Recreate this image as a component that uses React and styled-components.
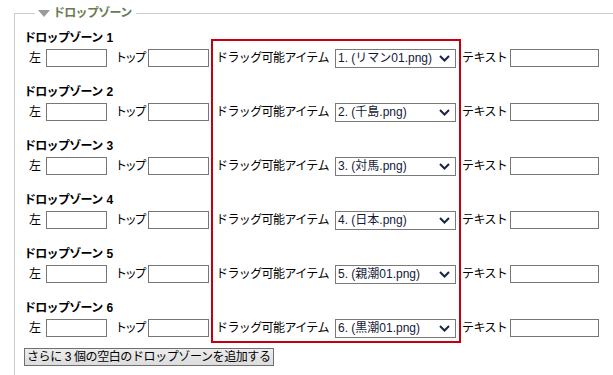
import React from "react";
import styled, { createGlobalStyle } from "styled-components";

const GlobalStyle = createGlobalStyle`
  html, body {
    margin: 0;
    padding: 0;
    background: #ffffff;
    overflow: hidden;
  }
  body {
    font-family: "Liberation Sans", "Noto Sans CJK JP", sans-serif;
    font-size: 12px;
    color: #000;
  }
`;

const Page = styled.div`
  position: relative;
  width: 613px;
  height: 375px;
  overflow: hidden;
`;

const Section = styled.fieldset`
  margin: 4px -60px 0 14px;
  padding: 7px 0 60px 9px;
  border: 0;
  border-top: 1px solid #cccccc;
  border-left: 1px solid #cccccc;
  min-width: 0;
`;

const Legend = styled.legend`
  margin-left: 11px;
  padding: 0 4px 0 3px;
  line-height: 18px;
  color: #677b4f;
  font-size: 12px;
  font-weight: bold;
  letter-spacing: -0.7px;
  display: flex;
  align-items: center;
  gap: 3px;
`;

const Triangle = styled.svg`
  display: block;
  margin-top: 1px;
`;

const Group = styled.div`
  margin-bottom: 14px;

  &:last-of-type {
    margin-bottom: 0;
  }
`;

const ZoneTitle = styled.div`
  font-weight: bold;
  line-height: 18px;
  height: 18px;
  letter-spacing: -0.7px;
  white-space: nowrap;

  span {
    margin-left: 4px;
  }
`;

const Row = styled.div`
  display: flex;
  align-items: center;
  height: 22px;
  padding-left: 5px;
`;

const Label = styled.span`
  flex: 0 0 ${(props) => props.$w}px;
  white-space: nowrap;
  letter-spacing: ${(props) => props.$ls ?? -0.6}px;
  line-height: 18px;
`;

const TextBox = styled.input`
  box-sizing: border-box;
  width: ${(props) => props.$w}px;
  height: 18px;
  margin: 0 ${(props) => props.$after}px 0 0;
  padding: 0 2px;
  border: 1px solid #767676;
  background: #fff;
  font: inherit;
`;

const SelectWrap = styled.div`
  position: relative;
  width: 121px;
  height: 19px;
  margin-right: 6px;
`;

const Select = styled.select`
  box-sizing: border-box;
  appearance: none;
  width: 100%;
  height: 100%;
  margin: 0;
  padding: 0 0 0 2px;
  border: 1px solid #7a7a7a;
  border-radius: 0;
  background: #fff;
  color: #141a38;
  font: inherit;
  outline: none;
`;

const Chevron = styled.svg`
  position: absolute;
  right: 6px;
  top: 6px;
  pointer-events: none;
`;

const AddButton = styled.button`
  margin-top: 9px;
  height: 18px;
  padding: 0 2px;
  border: 1px solid #707070;
  border-radius: 0;
  background: linear-gradient(#ededed, #dcdcdc);
  color: #000;
  font: inherit;
  letter-spacing: -0.4px;
  line-height: 16px;
  white-space: nowrap;
`;

// 赤枠 (注釈用のハイライト)
const Highlight = styled.div`
  position: absolute;
  left: 211px;
  top: 39px;
  width: 250px;
  height: 304px;
  box-sizing: border-box;
  border: 2px solid #c40010;
  pointer-events: none;
`;

const items = [
  "1. (リマン01.png)",
  "2. (千島.png)",
  "3. (対馬.png)",
  "4. (日本.png)",
  "5. (親潮01.png)",
  "6. (黒潮01.png)",
];

export default function App() {
  return (
    <Page>
      <GlobalStyle />
      <Section>
        <Legend>
          <Triangle width="12" height="7" viewBox="0 0 12 7">
            <path d="M0 0 L12 0 L6 7 Z" fill="#9a9a9a" />
          </Triangle>
          ドロップゾーン
        </Legend>
        {items.map((item, index) => (
          <Group key={index}>
            <ZoneTitle>
              ドロップゾーン<span>{index + 1}</span>
            </ZoneTitle>
            <Row>
              <Label $w={17}>左</Label>
              <TextBox $w={61} $after={8} />
              <Label $w={33} $ls={-2.2}>トップ</Label>
              <TextBox $w={61} $after={7} />
              <Label $w={119}>ドラッグ可能アイテム</Label>
              <SelectWrap>
                <Select defaultValue={item}>
                  <option>{item}</option>
                </Select>
                <Chevron width="11" height="7" viewBox="0 0 11 7">
                  <path d="M1 1 L5.5 5.5 L10 1" fill="none" stroke="#1c2444" strokeWidth="2" />
                </Chevron>
              </SelectWrap>
              <Label $w={48}>テキスト</Label>
              <TextBox $w={89} $after={0} />
            </Row>
          </Group>
        ))}
        <AddButton>さらに 3 個の空白のドロップゾーンを追加する</AddButton>
      </Section>
      <Highlight />
    </Page>
  );
}
